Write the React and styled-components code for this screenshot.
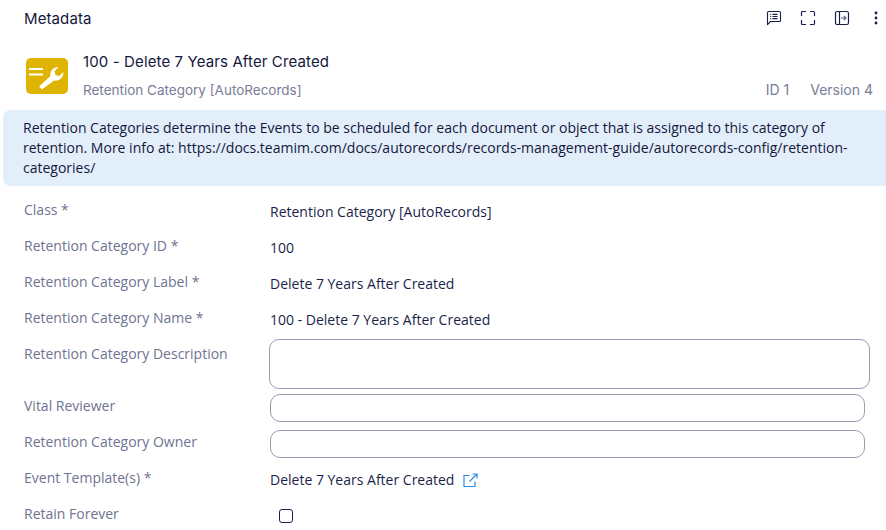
import React from 'react';
import styled, { createGlobalStyle } from 'styled-components';

const GlobalStyle = createGlobalStyle`
  html, body {
    margin: 0;
    height: 100%;
    overflow: hidden;
    background: #fff;
  }
`;

const ink = '#1b1f4b';

const App = () => (
  <Page>
    <GlobalStyle />
    <Toolbar>
      <ToolbarTitle>Metadata</ToolbarTitle>
      <ToolbarIcons>
        <IconButton>
          <svg width="16" height="16" viewBox="0 0 16 16" fill="none" stroke={ink} strokeWidth="1.1">
            <path d="M1.500 14.600V2.800c0-.8.5-1.300 1.300-1.300h10.400c.8 0 1.300.5 1.300 1.300v7.400c0 .8-.5 1.300-1.300 1.300H4.400z" strokeLinejoin="round" />
            <path d="M6.500 4.400h5M6.500 6.500h5M6.500 8.600h5M4.200 4.400h1M4.200 6.500h1M4.200 8.600h1" />
          </svg>
        </IconButton>
        <IconButton>
          <svg width="16" height="16" viewBox="0 0 16 16" fill="none" stroke={ink} strokeWidth="1.2">
            <path d="M1.500 6V2.600c0-.7.4-1.100 1.100-1.100H6M10 1.500h3.400c.7 0 1.100.4 1.100 1.100V6M14.500 10v3.400c0 .7-.4 1.100-1.100 1.100H10M6 14.500H2.600c-.7 0-1.100-.4-1.100-1.100V10" />
          </svg>
        </IconButton>
        <IconButton>
          <svg width="16" height="16" viewBox="0 0 16 16" fill="none" stroke={ink} strokeWidth="1.2">
            <rect x="1.500" y="1.500" width="13" height="13" rx="1.800" />
            <path d="M5.500 1.500v13" />
            <path d="M7 8h5M9.800 5.800 12 8l-2.200 2.200" stroke="#5b5f80" />
          </svg>
        </IconButton>
        <IconButton>
          <svg width="16" height="16" viewBox="0 0 16 16" fill={ink}>
            <circle cx="8" cy="3" r="1.400" />
            <circle cx="8" cy="8" r="1.400" />
            <circle cx="8" cy="13" r="1.400" />
          </svg>
        </IconButton>
      </ToolbarIcons>
    </Toolbar>

    <Heading>
      <Badge>
        <svg width="42" height="36" viewBox="0 0 42 36" fill="none">
          <path d="M3 11h14M3 16.500h14" stroke="#fff" strokeWidth="2.200" />
          <path
            d="M16 31.500 13 28.500 24.500 18c-1-4 1.500-8.500 8-9l-4 4.500 1 3.500 3.500 1 4.500-4c.2 5.500-4.500 9.500-9.500 8.500z"
            fill="#fff"
          />
        </svg>
      </Badge>
      <HeadingText>
        <Title>100 - Delete 7 Years After Created</Title>
        <SubRow>
          <span>Retention Category [AutoRecords]</span>
          <Meta>
            <span>ID 1</span>
            <span>Version 4</span>
          </Meta>
        </SubRow>
      </HeadingText>
    </Heading>

    <Notice>
      Retention Categories determine the Events to be scheduled for each document or object that is assigned to this category of
      retention. More info at: https://docs.teamim.com/docs/autorecords/records-management-guide/autorecords-config/retention-categories/
    </Notice>

    <Form>
      <Row>
        <Label>Class *</Label>
        <Value>Retention Category [AutoRecords]</Value>
      </Row>
      <Row>
        <Label>Retention Category ID *</Label>
        <Value>100</Value>
      </Row>
      <Row>
        <Label>Retention Category Label *</Label>
        <Value>Delete 7 Years After Created</Value>
      </Row>
      <Row>
        <Label>Retention Category Name *</Label>
        <Value>100 - Delete 7 Years After Created</Value>
      </Row>
      <Row $tall>
        <Label>Retention Category Description</Label>
        <TextArea />
      </Row>
      <Row $inset>
        <Label>Vital Reviewer</Label>
        <TextInput />
      </Row>
      <Row $inset>
        <Label>Retention Category Owner</Label>
        <TextInput />
      </Row>
      <Row>
        <Label>Event Template(s) *</Label>
        <Value>
          Delete 7 Years After Created
          <LinkIcon>
            <svg width="15" height="15" viewBox="0 0 15 15" fill="none" stroke="#2b8be6" strokeWidth="1.200">
              <path d="M6.500 2.500H1v11h11V8.500" />
              <path d="M6.500 8.500 14 1M9.500 1H14v4.500" />
            </svg>
          </LinkIcon>
        </Value>
      </Row>
      <Row>
        <Label>Retain Forever</Label>
        <CheckBox type="checkbox" />
      </Row>
    </Form>
  </Page>
);

const Page = styled.div`
  width: 886px;
  height: 530px;
  overflow: hidden;
  background: #fff;
  font-family: 'Open Sans', sans-serif;
  font-size: 14px;
  color: ${ink};
`;

const Toolbar = styled.header`
  height: 36px;
  padding: 0 2px 0 24px;
  display: flex;
  align-items: center;
  justify-content: space-between;
`;

const ToolbarTitle = styled.h1`
  margin: 0;
  font-family: Inter, sans-serif;
  font-size: 15px;
  font-weight: 400;
  letter-spacing: 0.1px;
  color: #14173c;
`;

const ToolbarIcons = styled.div`
  display: flex;
  gap: 18px;
`;

const IconButton = styled.span`
  width: 16px;
  height: 16px;
  display: block;
`;

const Heading = styled.section`
  height: 74px;
  padding: 0 13px 0 24px;
  display: flex;
  align-items: flex-start;
`;

const Badge = styled.div`
  width: 42px;
  height: 36px;
  margin: 22px 15px 0 2px;
  flex: none;
  border-radius: 5px;
  background: #dfb400;
`;

const HeadingText = styled.div`
  flex: 1;
  padding-top: 16px;
`;

const Title = styled.h2`
  margin: 0;
  font-family: Inter, sans-serif;
  font-size: 15px;
  line-height: 20px;
  font-weight: 400;
  letter-spacing: 0.12px;
  color: #14173c;
`;

const SubRow = styled.div`
  margin-top: 8px;
  display: flex;
  justify-content: space-between;
  font-family: Inter, sans-serif;
  font-size: 13.5px;
  line-height: 20px;
  color: #7a7d97;
`;

const Meta = styled.div`
  display: flex;
  gap: 21px;
  font-size: 14px;
`;

const Notice = styled.div`
  margin-left: 3px;
  padding: 8px 12px 8px 20px;
  box-sizing: border-box;
  height: 76px;
  border-radius: 8px 0 0 8px;
  background: #e3eefb;
  line-height: 20px;
  color: #14173c;
`;

const Form = styled.div`
  padding: 14px 16px 0 24px;
`;

const Row = styled.div`
  display: grid;
  grid-template-columns: ${({ $inset }) => ($inset ? '246px 595px' : '245px 1fr')};
  min-height: ${({ $tall }) => ($tall ? '52px' : '36px')};
  align-items: start;
`;

const Label = styled.div`
  line-height: 20px;
  color: #6f7390;
`;

const Value = styled.div`
  padding: 2px 0 0 1px;
  line-height: 20px;
  display: flex;
  align-items: center;
`;

const TextArea = styled.div`
  height: 48px;
  margin-top: -5px;
  border: 1px solid #9a9cb0;
  border-radius: 10px;
`;

const TextInput = styled.div`
  height: 26px;
  margin-top: -2px;
  border: 1px solid #9a9cb0;
  border-radius: 10px;
`;

const LinkIcon = styled.span`
  display: inline-flex;
  margin-left: 9px;
`;

const CheckBox = styled.input`
  appearance: none;
  width: 14px;
  height: 14px;
  margin: 5px 0 0 10px;
  border: 1px solid ${ink};
  border-radius: 3px;
  background: #fff;
`;

export default App;
